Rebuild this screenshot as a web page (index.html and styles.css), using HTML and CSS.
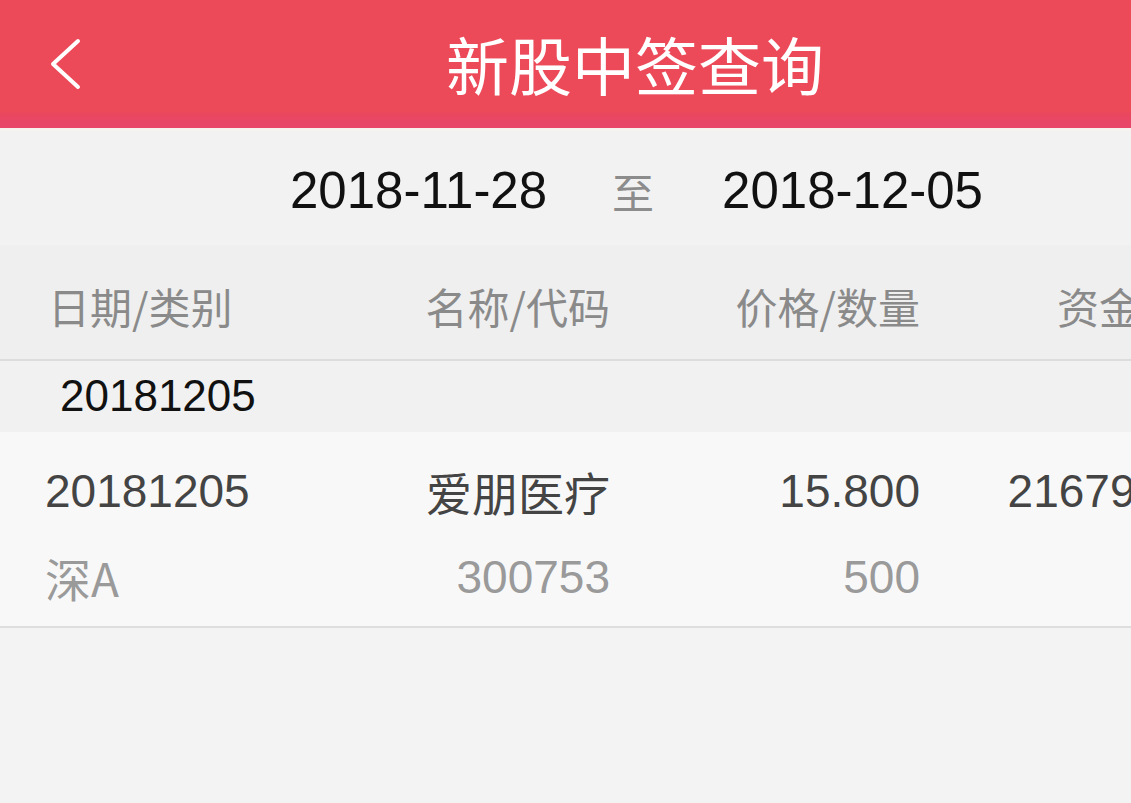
FILE: index.html
```html
<!DOCTYPE html>
<html lang="zh">
<head>
<meta charset="utf-8">
<title>新股中签查询</title>
<link rel="stylesheet" href="styles.css">
</head>
<body>
<div class="page">
  <header class="topbar">
    <svg class="back" width="40" height="60" viewBox="0 0 40 60" aria-hidden="true">
      <polyline points="28,10 3,33 28,56" fill="none" stroke="#fff" stroke-width="4" stroke-linecap="round" stroke-linejoin="round"/>
    </svg>
    <h1 class="title">新股中签查询</h1>
  </header>
  <div class="sep"></div>
  <div class="daterange">
    <span class="date">2018-11-28</span>
    <span class="to">至</span>
    <span class="date">2018-12-05</span>
  </div>
  <div class="thead grid">
    <span class="c1">日期/类别</span>
    <span class="c2">名称/代码</span>
    <span class="c3">价格/数量</span>
    <span class="c4">资金余额</span>
  </div>
  <div class="group">20181205</div>
  <div class="row">
    <div class="line grid main">
      <span class="c1 num">20181205</span>
      <span class="c2">爱朋医疗</span>
      <span class="c3 num">15.800</span>
      <span class="c4 num">21679.000</span>
    </div>
    <div class="line grid sub">
      <span class="c1">深A</span>
      <span class="c2 num">300753</span>
      <span class="c3 num">500</span>
      <span class="c4"></span>
    </div>
  </div>
  <div class="rest"></div>
</div>
</body>
</html>
```
FILE: styles.css
```css
html, body {
  margin: 0;
  padding: 0;
  background: #f3f3f3;
  overflow: hidden;
}
body {
  width: 1131px;
  height: 803px;
  font-family: "Liberation Sans", "Noto Sans CJK SC", sans-serif;
}
.page {
  width: 1131px;
  height: 803px;
  overflow: hidden;
  display: flex;
  flex-direction: column;
}
.topbar {
  height: 128px;
  flex: none;
  background: linear-gradient(#ec4959 0, #ec4959 87%, #e9475f 89%, #e8476a 100%);
  display: flex;
  align-items: center;
  padding-left: 446px;
  position: relative;
}
.back {
  position: absolute;
  left: 50px;
  top: 31px;
}
.title {
  margin: 0;
  color: #fff;
  font-family: "Noto Sans CJK SC", sans-serif;
  font-weight: 400;
  font-size: 63px;
  line-height: 70px;
  white-space: nowrap;
  margin-top: -2px;
}
.sep {
  height: 3px;
  background: #f7f3ee;
  flex: none;
}
.daterange {
  height: 114px;
  flex: none;
  background: #f2f2f2;
  display: flex;
  align-items: center;
  padding-left: 290px;
  padding-top: 5px;
  box-sizing: border-box;
}
.date {
  font-size: 51px;
  color: #111;
  line-height: 1;
}
.to {
  font-family: "Noto Sans CJK SC", sans-serif;
  font-size: 42px;
  color: #8c8c8c;
  line-height: 1;
  margin: 0 68px 0 65px;
}
.grid {
  display: grid;
  grid-template-columns: 255px 310px 310px 305px;
  padding-left: 45px;
  align-items: center;
}
.grid .c1 { text-align: left; }
.grid .c2, .grid .c3, .grid .c4 { text-align: right; white-space: nowrap; }
.thead {
  flex: none;
  background: #efefef;
  border-bottom: 2px solid #dcdcdc;
  font-family: "Noto Sans CJK SC", sans-serif;
  font-size: 42px;
  color: #8a8a8a;
  line-height: 1;
  padding-top: 8px;
  box-sizing: border-box;
  height: 116px;
}
.thead .c1 { margin-left: 3px; }
.group {
  height: 71px;
  flex: none;
  background: #f1f1f1;
  display: flex;
  align-items: center;
  padding-left: 60px;
  font-size: 44px;
  color: #111;
  line-height: 1;
  padding-bottom: 2px;
  box-sizing: border-box;
}
.row {
  flex: none;
  height: 196px;
  background: #f8f8f8;
  border-bottom: 2px solid #dedede;
  display: flex;
  flex-direction: column;
  padding-top: 16px;
  box-sizing: border-box;
}
.line {
  font-family: "Noto Sans CJK SC", sans-serif;
  font-size: 46px;
  line-height: 1;
}
.line .num {
  font-family: "Liberation Sans", sans-serif;
}
.main {
  height: 86px;
  color: #444;
}
.sub {
  height: 86px;
  color: #9a9a9a;
}
.rest {
  flex: 1;
  background: #f3f3f3;
}
```
